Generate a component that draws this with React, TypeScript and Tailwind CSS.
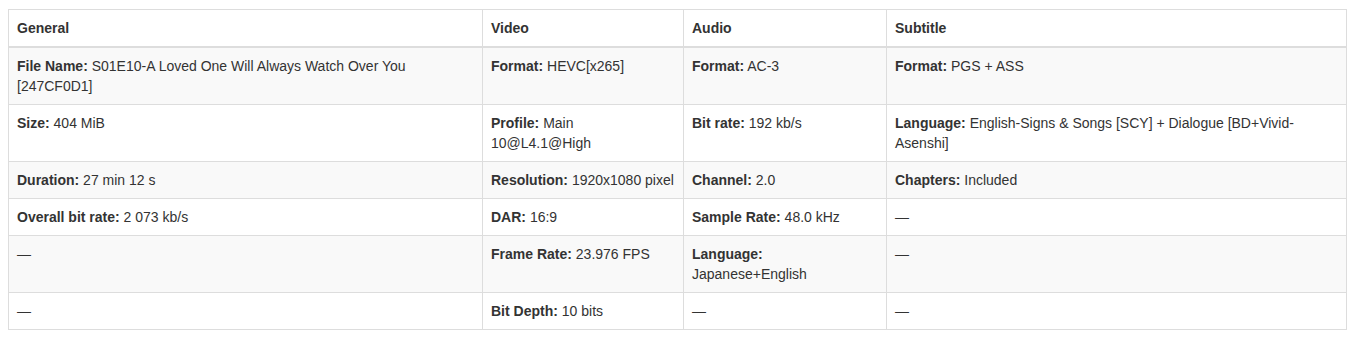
import React from "react";

type Cell = { label?: string; value?: string } | null;

const headers = ["General", "Video", "Audio", "Subtitle"];

const rows: Cell[][] = [
  [
    { label: "File Name:", value: "S01E10-A Loved One Will Always Watch Over You [247CF0D1]" },
    { label: "Format:", value: "HEVC[x265]" },
    { label: "Format:", value: "AC-3" },
    { label: "Format:", value: "PGS + ASS" },
  ],
  [
    { label: "Size:", value: "404 MiB" },
    { label: "Profile:", value: "Main 10@L4.1@High" },
    { label: "Bit rate:", value: "192 kb/s" },
    { label: "Language:", value: "English-Signs & Songs [SCY] + Dialogue [BD+Vivid-Asenshi]" },
  ],
  [
    { label: "Duration:", value: "27 min 12 s" },
    { label: "Resolution:", value: "1920x1080 pixel" },
    { label: "Channel:", value: "2.0" },
    { label: "Chapters:", value: "Included" },
  ],
  [
    { label: "Overall bit rate:", value: "2 073 kb/s" },
    { label: "DAR:", value: "16:9" },
    { label: "Sample Rate:", value: "48.0 kHz" },
    null,
  ],
  [
    null,
    { label: "Frame Rate:", value: "23.976 FPS" },
    { label: "Language:", value: "Japanese+English" },
    null,
  ],
  [null, { label: "Bit Depth:", value: "10 bits" }, null, null],
];

export default function App() {
  return (
    <div className="bg-white p-2 pt-[9px] font-['Liberation_Sans',Arial,sans-serif] text-[14px] leading-5 text-[#333]">
      <table className="w-[1338px] table-fixed border-collapse border border-[#ddd]">
        <colgroup>
          <col className="w-[474px]" />
          <col className="w-[201px]" />
          <col className="w-[203px]" />
          <col className="w-[460px]" />
        </colgroup>
        <thead>
          <tr>
            {headers.map((h) => (
              <th
                key={h}
                className="border border-b-2 border-[#ddd] p-2 text-left align-bottom font-bold"
              >
                {h}
              </th>
            ))}
          </tr>
        </thead>
        <tbody>
          {rows.map((row, i) => (
            <tr key={i} className={i % 2 === 0 ? "bg-[#f9f9f9]" : "bg-white"}>
              {row.map((cell, j) => (
                <td key={j} className="border border-[#ddd] p-2 align-top">
                  {cell ? (
                    <>
                      <b>{cell.label}</b> {cell.value}
                    </>
                  ) : (
                    "—"
                  )}
                </td>
              ))}
            </tr>
          ))}
        </tbody>
      </table>
    </div>
  );
}
